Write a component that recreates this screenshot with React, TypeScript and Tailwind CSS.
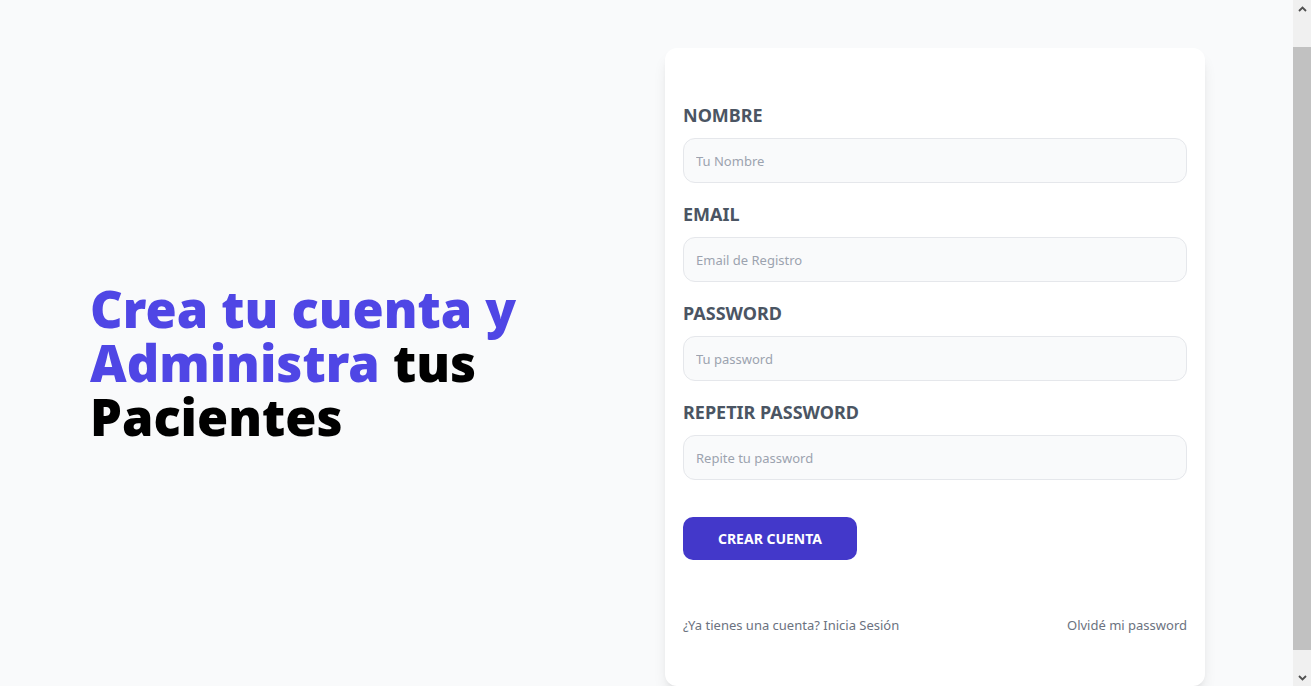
import React from "react";

function Field({ label, placeholder, type = "text" }: { label: string; placeholder: string; type?: string }) {
  return (
    <div className="flex flex-col">
      <label className="block uppercase text-[#4b5563] text-[18px] leading-[28px] font-bold">{label}</label>
      <input
        type={type}
        placeholder={placeholder}
        className="mt-[9px] h-[45px] w-full rounded-xl border border-[#e5e7eb] bg-[#f9fafb] px-3 text-[13px] text-[#374151] placeholder:text-[#9ca3af] outline-none"
      />
    </div>
  );
}

function Scrollbar() {
  return (
    <div className="w-[18px] shrink-0 h-full bg-[#f0f0f0] flex flex-col items-stretch">
      <div className="h-[17px] flex items-center justify-center">
        <svg width="9" height="6" viewBox="0 0 9 6">
          <path d="M1 5 L4.5 1.5 L8 5" stroke="#505050" strokeWidth="1.8" fill="none" />
        </svg>
      </div>
      <div className="flex-1 px-0 pt-[30px] pb-[19px] flex flex-col">
        <div className="flex-1 bg-[#c1c1c1]" />
      </div>
      <div className="h-[17px] flex items-center justify-center">
        <svg width="9" height="6" viewBox="0 0 9 6">
          <path d="M1 1 L4.5 4.5 L8 1" stroke="#505050" strokeWidth="1.8" fill="none" />
        </svg>
      </div>
    </div>
  );
}

export default function App() {
  return (
    <div className="h-[686px] flex overflow-hidden bg-[#f9fafb] font-['Noto_Sans',sans-serif]">
      <div className="flex-1 min-w-0 overflow-hidden">
        <main className="grid grid-cols-[1fr_540px] gap-10 items-center pl-[90px] pr-[88px] pt-12 pb-[33px]">
          <div className="pb-[9px]">
            <h1 className="text-[#4f46e5] font-black text-[50.5px] leading-[54px] max-w-[470px]">
              Crea tu cuenta y Administra <span className="text-black">tus Pacientes</span>
            </h1>
          </div>
          <div className="bg-white rounded-xl shadow-lg px-[18px] pt-[53px] pb-[51px]">
            <form className="flex flex-col gap-[17px]">
              <Field label="Nombre" placeholder="Tu Nombre" />
              <Field label="Email" placeholder="Email de Registro" type="email" />
              <Field label="Password" placeholder="Tu password" type="password" />
              <Field label="Repetir Password" placeholder="Repite tu password" type="password" />
            </form>
            <button className="mt-[37px] h-[43px] w-[174px] rounded-[10px] bg-[#4338ca] text-white font-bold uppercase text-[14px]">
              Crear Cuenta
            </button>
            <nav className="mt-[55px] flex justify-between text-[13px] leading-[20px] text-[#6b7280]">
              <a href="#">¿Ya tienes una cuenta? Inicia Sesión</a>
              <a href="#">Olvidé mi password</a>
            </nav>
          </div>
        </main>
      </div>
      <Scrollbar />
    </div>
  );
}
